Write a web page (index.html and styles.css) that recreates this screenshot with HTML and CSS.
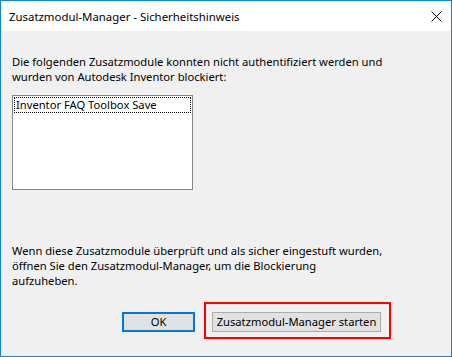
FILE: index.html
```html
<!DOCTYPE html>
<html lang="de">
  <head>
    <meta charset="UTF-8" />
    <meta name="viewport" content="width=device-width, initial-scale=1.0" />
    <title>Zusatzmodul-Manager - Sicherheitshinweis</title>
    <link rel="stylesheet" href="styles.css">
  </head>
  <body>
    <div class="window">
      <div class="titlebar">
        <span class="title">Zusatzmodul-Manager - Sicherheitshinweis</span>
        <span class="close">
          <svg width="11" height="11" viewBox="0 0 11 11">
            <path d="M0.5 0.5 L10.5 10.5 M10.5 0.5 L0.5 10.5" stroke="#000" stroke-width="1" fill="none" />
          </svg>
        </span>
      </div>

      <div class="content">
        <p class="message">
          Die folgenden Zusatzmodule konnten nicht authentifiziert werden und<br />
          wurden von Autodesk Inventor blockiert:
        </p>

        <div class="listbox">
          <div class="list-item">Inventor FAQ Toolbox Save</div>
        </div>

        <p class="message hint">
          Wenn diese Zusatzmodule überprüft und als sicher eingestuft wurden,<br />
          öffnen Sie den Zusatzmodul-Manager, um die Blockierung<br />
          aufzuheben.
        </p>

        <div class="buttons">
          <button class="btn btn-ok">OK</button>
          <div class="highlight">
            <button class="btn btn-manager">Zusatzmodul-Manager starten</button>
          </div>
        </div>
      </div>
    </div>
  </body>
</html>
```

FILE: styles.css
```css
body {
  margin: 0;
  font-family: "Noto Sans", "Open Sans", sans-serif;
  font-size: 11.2px;
  color: #000;
  background-color: #f0f0f0;
}
.window {
  width: 452px;
  height: 357px;
  box-sizing: border-box;
  border: 1px solid #1883d7;
  display: flex;
  flex-direction: column;
}
.titlebar {
  height: 30px;
  background-color: #fff;
  display: flex;
  align-items: center;
  justify-content: space-between;
  padding-left: 8px;
}
.title {
  font-size: 11.4px;
  line-height: 15px;
}
.close {
  display: flex;
  padding-right: 9px;
  padding-top: 1px;
}
.content {
  flex: 1;
  background-color: #f0f0f0;
  padding: 23px 11px 0 11px;
}
.message {
  margin: 0;
  line-height: 15px;
  white-space: nowrap;
}
.listbox {
  width: 181px;
  height: 95px;
  box-sizing: border-box;
  margin-top: 11px;
  border: 1px solid #828790;
  background-color: #fff;
  padding: 1px;
}
.list-item {
  border: 1px dotted #000;
  line-height: 14px;
  padding-left: 1px;
  white-space: nowrap;
}
.hint {
  margin-top: 53px;
}
.buttons {
  display: flex;
  align-items: flex-start;
  margin-top: 14px;
  padding-left: 110px;
}
.btn {
  font-family: inherit;
  font-size: 11.2px;
  background-color: #e1e1e1;
  border: 1px solid #adadad;
  border-radius: 0;
  padding: 0;
  height: 20px;
  line-height: 16px;
  color: #000;
  white-space: nowrap;
}
.btn-ok {
  width: 73px;
  margin-top: 10px;
  border: 2px solid #0078d7;
}
.highlight {
  margin-left: 9px;
  border: 2px solid #ff0000;
  padding: 8px 8px 5px 6px;
}
.btn-manager {
  width: 169px;
  display: block;
}
```
